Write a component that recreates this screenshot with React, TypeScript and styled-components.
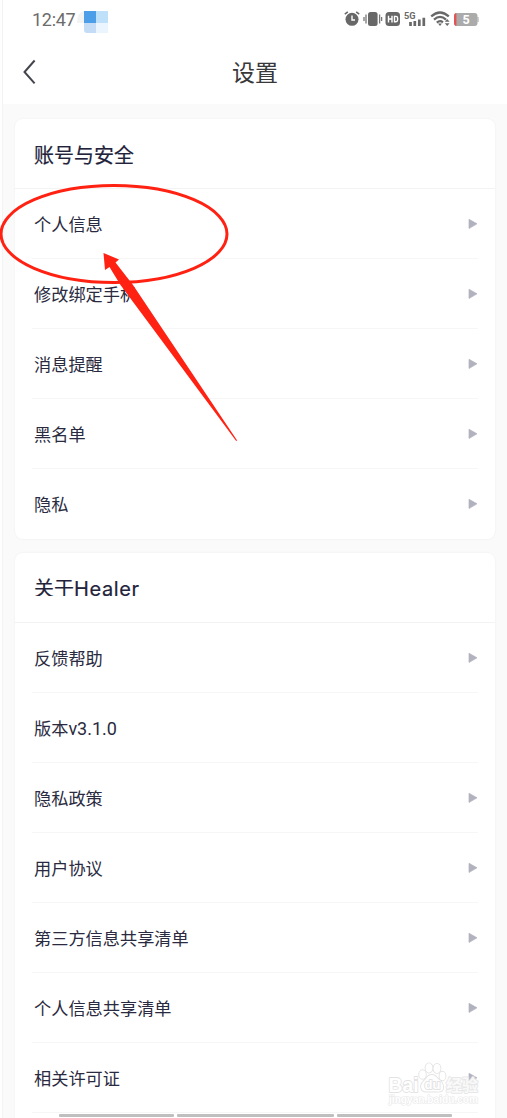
import React from "react";
import styled, { createGlobalStyle } from "styled-components";

const Global = createGlobalStyle`
  * { box-sizing: border-box; }
  body { margin: 0; background: #fff; overflow: hidden; font-family: "Noto Sans CJK SC", sans-serif; }
`;

const Screen = styled.div`
  position: relative;
  width: 507px;
  height: 1118px;
  overflow: hidden;
  padding-left: 2px;
  background: #fefefe;
`;

const Page = styled.div`
  height: 100%;
  border-left: 1px solid #f3f3f3;
  background: #fafafa;
`;

const TopArea = styled.header`
  height: 104px;
  background: #fff;
`;

const StatusBar = styled.div`
  display: flex;
  align-items: center;
  height: 40px;
  padding: 0 28px 0 29px;
`;

const Clock = styled.span`
  width: 49px;
  font: 18px/20px Roboto, sans-serif;
  letter-spacing: -0.3px;
  color: #6c6c6c;
`;

const Mosaic = styled.svg`
  display: block;
  margin: 3px auto 0 -4px;
`;

const StatusIcons = styled.svg`
  display: block;
`;

const NavBar = styled.div`
  display: grid;
  grid-template-columns: 60px 1fr 60px;
  align-items: center;
  height: 64px;
`;

const BackIcon = styled.svg`
  display: block;
  margin-left: 19px;
`;

const Title = styled.h1`
  margin: 0 0 2px;
  text-align: center;
  font-size: 23px;
  font-weight: 400;
  line-height: 34px;
  color: #38383a;
`;

const Content = styled.main`
  display: flex;
  flex-direction: column;
  gap: 14px;
  padding: 15px 12px 0;
`;

const Card = styled.section<{ $open?: boolean }>`
  flex: none;
  width: 480px;
  padding-bottom: ${(p) => (p.$open ? "20px" : "0")};
  border-radius: 8px;
  background: #fff;
  box-shadow: 0 0 1px 1px #f5f5f5;
`;

const CardHead = styled.div`
  display: flex;
  align-items: center;
  height: 70px;
  padding: 1px 20px 0 19px;
  border-bottom: 1px solid #f3f3f4;
`;

const CardTitle = styled.h2<{ $clipped?: boolean }>`
  margin: 0;
  height: ${(p) => (p.$clipped ? "22px" : "30px")};
  margin-top: ${(p) => (p.$clipped ? "-6px" : "4px")};
  overflow: hidden;
  font-family: Inter, "Noto Sans CJK SC", sans-serif;
  font-size: 20px;
  font-weight: 400;
  line-height: 30px;
  color: #22223a;
  -webkit-text-stroke: 0.2px #22223a;
`;

const Latin = styled.span`
  letter-spacing: 0.6px;
`;

const Row = styled.div<{ $last?: boolean }>`
  display: flex;
  align-items: center;
  justify-content: space-between;
  height: 70px;
  margin: 0 17px 0 17px;
  padding: 0 0 0 2px;
  border-bottom: ${(p) => (p.$last ? "0" : "1px solid #f6f6f7")};
`;

const Label = styled.span`
  margin-top: 2px;
  font-family: Roboto, "Noto Sans CJK SC", sans-serif;
  font-size: 17.2px;
  line-height: 26px;
  color: #2a2a40;
`;

const Version = styled.span`
  font-size: 18px;
`;

const Arrow = styled.svg`
  display: block;
`;

const Overlay = styled.svg`
  position: absolute;
  left: 0;
  top: 0;
  pointer-events: none;
`;

const BottomBar = styled.div`
  position: absolute;
  left: 59px;
  top: 1114px;
  display: flex;
  gap: 3px;
`;

const Segment = styled.i<{ $w: number }>`
  width: ${(p) => p.$w}px;
  height: 3px;
  border-radius: 1px;
  background: #bfbfbf;
`;

const account = ["个人信息", "修改绑定手机", "消息提醒", "黑名单", "隐私"];
const about = ["反馈帮助", "版本", "隐私政策", "用户协议", "第三方信息共享清单", "个人信息共享清单", "相关许可证"];

function Item({ text, last }: { text: string; last?: boolean }) {
  const isVersion = text === "版本";
  return (
    <Row $last={last}>
      <Label>{text}{isVersion && <Version>v3.1.0</Version>}</Label>
      {!isVersion && (
        <Arrow width="10" height="12" viewBox="0 0 10 12">
          <path d="M1 1.3 L9 5.8 L1 10.5Z" fill="#b2b2bf" stroke="#b2b2bf" strokeWidth=".7" strokeLinejoin="round" />
        </Arrow>
      )}
    </Row>
  );
}

export default function App() {
  return (
    <>
      <Global />
      <Screen>
        <Page>
          <TopArea>
            <StatusBar>
              <Clock>12:47</Clock>
              <Mosaic width="31" height="22" viewBox="0 0 31 22">
                <path d="M7 0 Q0 1 0 12H7Z" fill="#f3f3f3" />
                <rect x="7" width="12" height="12" fill="#4c9ee9" />
                <rect x="19" width="12" height="12" fill="#bee0f8" />
                <path d="M7 12h12v10H10q-3 0-3-3z" fill="#c5dcf7" />
                <rect x="19" y="12" width="12" height="10" fill="#ebf5fe" />
              </Mosaic>
              <StatusIcons width="136" height="20" viewBox="343 10 136 20">
                <circle cx="352" cy="19.3" r="6.5" fill="#686868" />
                <path d="M352 15.5V20H355" fill="none" stroke="#fff" strokeWidth="1.4" />
                <path d="M344.8 14.2l3-2.4M359.2 14.2l-3-2.4" stroke="#686868" strokeWidth="1.5" />
                <rect x="368" y="12" width="9.6" height="14" rx="2.5" fill="#686868" />
                <path d="M366 14.5v9M364 17v4M379.6 14.5v9M381.6 17v4" stroke="#777" strokeWidth="1.3" />
                <rect x="385.5" y="12" width="14.5" height="14" rx="3.5" fill="#686868" />
                <path d="M388.5 15.7v6.8M392 15.7v6.8M388.5 19h3.5M394.5 16.4v5.4h1.4q1.7 0 1.7-1.7v-2q0-1.7-1.7-1.7z" fill="none" stroke="#fff" strokeWidth="1.4" />
                <text x="404" y="18.7" fontFamily="Roboto, sans-serif" fontWeight="700" fontSize="9.2" fill="#686868">5G</text>
                <path d="M410.5 22V26M414.8 21V26M419.3 19.5V26M423.8 17.800V26" stroke="#686868" strokeWidth="2.700" />
                <g fill="none" stroke="#686868" strokeWidth="2.200">
                  <path d="M431.200 16.400Q440 8.600 448.800 16.400" />
                  <path d="M434 19.600Q440 14.300 446 19.600" />
                  <path d="M436.800 22.600Q440 19.900 443 22.300" />
                </g>
                <path d="M438 23.400h4l-2 2.600zM444.800 21.700l2.400-2.700 2.400 2.700zM444.800 23.300h4.800l-2.400 2.700z" fill="#686868" />
                <rect x="454" y="13" width="23.500" height="13" rx="3" fill="#ababab" />
                <path d="M456 13h.4v13H456q-2-.5-2-3v-7q0-2.500 2-3z" fill="#e55252" />
                <path d="M478 17v5" stroke="#b5b5b5" strokeWidth="1.300" />
                <text x="462.600" y="23.900" fontFamily="Roboto, sans-serif" fontWeight="700" fontSize="12.500" fill="#fff">5</text>
              </StatusIcons>
            </StatusBar>
            <NavBar>
              <BackIcon width="16" height="26" viewBox="0 0 16 26">
                <path d="M12.600 1.500 L2.500 13 L12.600 24.300" fill="none" stroke="#44444d" strokeWidth="2" />
              </BackIcon>
              <Title>设置</Title>
            </NavBar>
          </TopArea>
          <Content>
            <Card>
              <CardHead><CardTitle>账号与安全</CardTitle></CardHead>
              {account.map((t, i) => <Item key={t} text={t} last={i === account.length - 1} />)}
            </Card>
            <Card $open>
              <CardHead><CardTitle $clipped>关于<Latin>Healer</Latin></CardTitle></CardHead>
              {about.map((t) => <Item key={t} text={t} />)}
            </Card>
          </Content>
        </Page>
        <BottomBar><Segment $w={115} /><Segment $w={157} /><Segment $w={115} /></BottomBar>
        <Overlay width="507" height="1118" viewBox="0 0 507 1118">
          <ellipse cx="114" cy="234" rx="113" ry="48.500" fill="none" stroke="#ff2112" strokeWidth="3" />
          <path d="M103.500 253 L119 259.500 L115.500 262.500 L133 285 L237.300 440.700 L236 440.700 L120.500 285 L109.500 267 L105 270Z" fill="#ff2112" />
          <g fill="#fff" stroke="#e3e3e4" strokeWidth="1.800" paintOrder="stroke" strokeLinejoin="round">
            <text x="388.500" y="1091.500" fontFamily="Liberation Sans, sans-serif" fontWeight="700" fontSize="21" textLength="30" lengthAdjust="spacingAndGlyphs">Bai</text>
            <ellipse cx="422.500" cy="1074.500" rx="3.300" ry="4.300" />
            <ellipse cx="429" cy="1068" rx="3.500" ry="4.700" />
            <ellipse cx="437" cy="1068.500" rx="3.500" ry="4.700" />
            <ellipse cx="442.500" cy="1076" rx="3" ry="4.300" />
            <path d="M432 1075q-4 0-6 4-5 4-5 8 1 5 6 4.500h9q8 1 7-5 0-4-5-7.500-3-4-6-4z" />
            <text x="424.500" y="1089" fontFamily="Liberation Sans, sans-serif" fontWeight="700" fontSize="13">du</text>
            <text x="446" y="1090.500" fontFamily="Noto Sans CJK SC, sans-serif" fontWeight="700" fontSize="16" fillOpacity=".8" strokeOpacity=".85">经验</text>
          </g>
          <text x="389" y="1103" fontFamily="Liberation Sans, sans-serif" fontWeight="700" fontSize="10.500" fill="#fff" stroke="#e8e8e9" strokeWidth="1.200" paintOrder="stroke" textLength="89" lengthAdjust="spacingAndGlyphs">jingyan.baidu.com</text>
        </Overlay>
      </Screen>
    </>
  );
}
